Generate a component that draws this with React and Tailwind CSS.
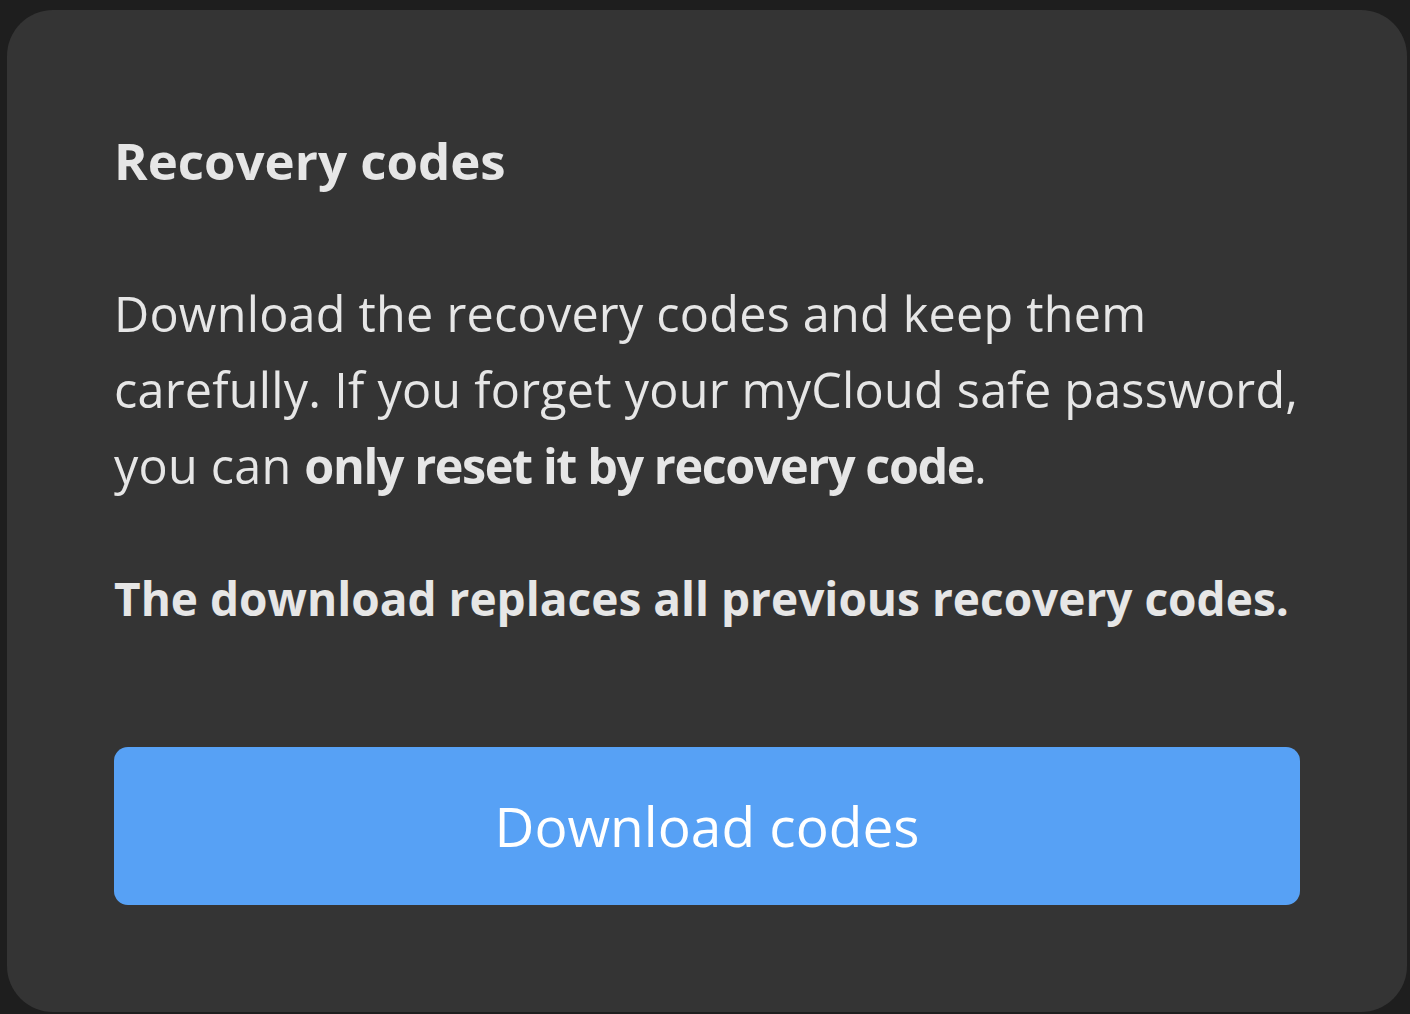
import React from 'react';

const App = () => {
  return (
    <div className="min-h-screen w-full bg-[#1e1e1e] pt-[10px] pl-[7px] pr-[3px] pb-[2px]" style={{ fontFamily: '"Open Sans", "Noto Sans", sans-serif' }}>
      <div className="h-[1002px] rounded-[46px] bg-[#343434] pl-[107px] pr-[107px] pt-[112px] text-[#e6e6e6]">
        <h2 className="text-[51px] font-bold leading-[76px]">Recovery codes</h2>

        <p className="mt-[77px] text-[48.5px] leading-[76px] tracking-[0.25px]">
          Download the recovery codes and keep them
          <br />
          carefully. If you forget your myCloud safe password,
          <br />
          you can <span className="font-bold tracking-[-1.4px]">only reset it by recovery code</span>.
        </p>

        <p className="mt-[57px] text-[46px] font-bold leading-[76px]">
          The download replaces all previous recovery codes.
        </p>

        <button className="mt-[111px] flex h-[158px] w-full items-center justify-center rounded-[14px] bg-[#57a1f5] text-[55px] text-white">
          Download codes
        </button>
      </div>
    </div>
  );
};

export default App;
